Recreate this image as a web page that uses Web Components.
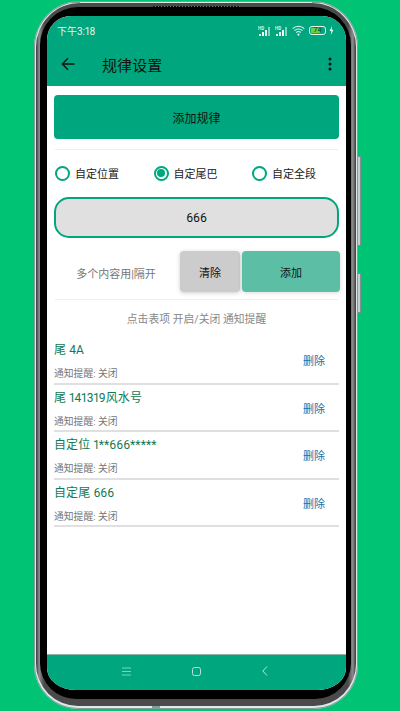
<!DOCTYPE html>
<html lang="zh">
<head>
<meta charset="utf-8">
<title>规律设置</title>
<style>
  html, body { margin: 0; height: 711px; overflow: hidden; }
  body {
    background: #00c373;
    font-family: Roboto, "Noto Sans CJK SC", sans-serif;
    font-variant-numeric: proportional-nums;
    display: flex;
    justify-content: flex-start;
    padding: 1px 0 0 34px;
    box-sizing: border-box;
  }
</style>
</head>
<body>
<x-phone>
  <x-status-bar></x-status-bar>
  <x-app-bar title="规律设置"></x-app-bar>
  <x-rule-page>
    <x-rule-row title="尾 4A"></x-rule-row>
    <x-rule-row title="尾 141319风水号"></x-rule-row>
    <x-rule-row title="自定位 1**666*****"></x-rule-row>
    <x-rule-row title="自定尾 666"></x-rule-row>
  </x-rule-page>
  <x-nav-bar></x-nav-bar>
</x-phone>

<script>
class XPhone extends HTMLElement {
  constructor() {
    super();
    this.attachShadow({ mode: "open" });
    this.shadowRoot.innerHTML = `
    <style>
      :host { display: block; position: relative; width: 324px; height: 708px; }
      .rim {
        width: 100%; height: 100%; box-sizing: border-box;
        padding: 2px 2px 3px;
        border-radius: 46px 46px 44px 44px;
        background: #dfe9ea;
        box-shadow: inset 0 0 0 1px #7f9c9e;
      }
      .metal {
        height: 100%; box-sizing: border-box;
        padding: 4px 5px 7px 4px;
        border-radius: 44px 44px 42px 42px;
        background: linear-gradient(90deg, #3a3a3a, #8c8c8c 1%, #4a4a4a 2.500%, #4a4a4a 97.500%, #8c8c8c 99%, #3a3a3a);
      }
      .bezel {
        height: 100%; box-sizing: border-box;
        padding: 9px 5px 9px 7px;
        border-radius: 38px 38px 36px 36px;
        background: #000;
      }
      .screen {
        height: 100%;
        border-radius: 24px 24px 28px 28px / 24px 24px 22px 22px;
        overflow: hidden;
        background: #fff;
        display: flex;
        flex-direction: column;
      }
      .key {
        position: absolute; right: -3px; width: 3px;
        background: #c4ced0; border: 1px solid #7d9094; border-left: 0;
        box-sizing: border-box; border-radius: 0 1px 1px 0;
      }
      .k1 { top: 155px; height: 90px; }
      .k2 { top: 272px; height: 40px; }
      .speaker {
        position: absolute; top: 5px; left: 119px; width: 87px; height: 1px;
        background: repeating-linear-gradient(90deg, #111 0 2px, #777 2px 3px);
      }
      .tab { position: absolute; background: #7f9c9e; }
      .t1 { top: 0; left: 38px; width: 8px; height: 2px; }
      .t2 { top: 0; left: 278px; width: 8px; height: 2px; }
      .t3 { bottom: 0; left: 118px; width: 8px; height: 3px; }
    </style>
    <div class="rim"><div class="metal"><div class="bezel">
      <div class="screen"><slot></slot></div>
    </div></div></div>
    <i class="speaker"></i>
    <i class="tab t1"></i><i class="tab t2"></i><i class="tab t3"></i>
    <i class="key k1"></i><i class="key k2"></i>`;
  }
}

class XStatusBar extends HTMLElement {
  constructor() {
    super();
    this.attachShadow({ mode: "open" });
    const signal = `
      <svg width="14" height="12" viewBox="0 0 14 12">
        <text x="0" y="4.500" font-size="4.500" font-weight="700" fill="#dff5ec" font-family="Roboto">HD</text>
        <g fill="#e6f7f0"><rect x="1" y="9" width="2" height="2"/><rect x="4" y="7" width="2" height="4"/><rect x="7" y="5" width="2" height="6"/></g>
        <rect x="10" y="2" width="2" height="9" fill="#7fd2bb"/>
      </svg>`;
    this.shadowRoot.innerHTML = `
    <style>
      :host { display: flex; align-items: center; justify-content: space-between; height: 28px; padding: 1px 12px 0 10px; box-sizing: border-box; background: #00a67d; color: #e6f7f0; font-size: 10px; flex: none; }
      .icons { display: flex; align-items: center; gap: 3px; }
      .batt { width: 15px; height: 7px; border: 1px solid #e6f7f0; border-radius: 3px; position: relative; margin-left: 1px; }
      .batt i { position: absolute; left: 1px; top: 1px; bottom: 1px; width: 9px; background: #6bd13f; border-radius: 1px; }
      .batt b { position: relative; display: block; text-align: center; font: 700 7px/7px Roboto, sans-serif; color: #0b6b45; }
    </style>
    <span>下午3:18</span>
    <span class="icons">
      ${signal}${signal}
      <svg width="13" height="11" viewBox="0 0 13 11" fill="none" stroke="#e6f7f0" stroke-width="1.100">
        <path d="M.7 3.600a8.200 8.200 0 0 1 11.600 0M2.500 5.600a5.700 5.700 0 0 1 8 0M4.300 7.500a3.200 3.200 0 0 1 4.400 0"/><circle cx="6.500" cy="9.600" r=".6" fill="#e6f7f0"/>
      </svg>
      <span class="batt"><i></i><b>74</b></span>
      <svg width="5" height="9" viewBox="0 0 5 9"><path d="M3 0 .5 5H2.300L1.800 9 4.500 3.800H2.700Z" fill="#e6f7f0"/></svg>
    </span>`;
  }
}

class XAppBar extends HTMLElement {
  constructor() {
    super();
    this.attachShadow({ mode: "open" });
    this.shadowRoot.innerHTML = `
    <style>
      :host { display: flex; align-items: center; height: 42px; background: #00a67d; flex: none; color: #111; padding-bottom: 2px; box-sizing: border-box; }
      .back { margin-left: 14px; display: block; }
      .title { font-size: 15px; margin-left: 27px; flex: 1; letter-spacing: .1px; }
      .more { margin-right: 14px; display: block; }
    </style>
    <svg class="back" width="14" height="14" viewBox="0 0 14 14" fill="none" stroke="#111" stroke-width="1.400">
      <path d="M13.500 7H1.500M7 1.300 1.300 7 7 12.700"/>
    </svg>
    <span class="title">${this.getAttribute("title")}</span>
    <svg class="more" width="4" height="14" viewBox="0 0 4 14" fill="#111">
      <circle cx="2" cy="2" r="1.500"/><circle cx="2" cy="7" r="1.500"/><circle cx="2" cy="12" r="1.500"/>
    </svg>`;
  }
}

class XRadio extends HTMLElement {
  constructor() {
    super();
    this.attachShadow({ mode: "open" });
    this.shadowRoot.innerHTML = `
    <style>
      :host { display: flex; align-items: center; gap: 5px; font-size: 11px; color: #222; }
      .dot { width: 15px; height: 15px; box-sizing: border-box; border: 2px solid #00a67d; border-radius: 50%; display: grid; place-items: center; }
      :host([checked]) .dot::after { content: ""; width: 8px; height: 8px; border-radius: 50%; background: #00a67d; }
    </style>
    <span class="dot"></span><slot></slot>`;
  }
}

class XRuleRow extends HTMLElement {
  constructor() {
    super();
    this.attachShadow({ mode: "open" });
    this.shadowRoot.innerHTML = `
    <style>
      :host { display: flex; height: 47.500px; box-sizing: border-box; border-bottom: 2px solid #e0e0e0; }
      .text { flex: 1; }
      .title { color: #0f7a55; font-size: 12px; line-height: 16px; padding-top: 5px; letter-spacing: .1px; white-space: nowrap; }
      .sub { color: #777; font-size: 9.800px; line-height: 12px; margin-top: 10px; }
      .del { color: #1a73a8; font-size: 11px; width: 36px; text-align: left; align-self: center; flex: none; padding-top: 1px; }
    </style>
    <div class="text">
      <div class="title">${this.getAttribute("title")}</div>
      <div class="sub">通知提醒: 关闭</div>
    </div>
    <span class="del">删除</span>`;
  }
}

class XRulePage extends HTMLElement {
  constructor() {
    super();
    this.attachShadow({ mode: "open" });
    this.shadowRoot.innerHTML = `
    <style>
      :host { display: block; flex: 1; min-height: 0; padding: 9px 7px 0; color: #111; font-size: 11px; }
      .btn { display: grid; place-items: center; border-radius: 4px; }
      .add-rule { height: 44px; background: #00a67d; font-size: 12px; }
      hr { border: 0; height: 1px; background: #eee; margin: 0 1px; }
      .top-line { margin-top: 10px; }
      .radios { display: grid; grid-template-columns: 98.500px 98.500px 1fr; padding: 15px 1px 0; height: 15px; margin-bottom: 17px; }
      .input { height: 41px; box-sizing: border-box; border: 2px solid #00a67d; border-radius: 15px; background: #e0e0e0; display: grid; place-items: center; font-size: 12px; }
      .actions { display: flex; align-items: stretch; height: 41px; margin-top: 13px; }
      .tip { width: 126px; display: grid; place-items: center; color: #777; font-size: 11px; box-sizing: border-box; padding: 2px 2px 0 0; }
      .clear { width: 60px; background: #cccccc; box-shadow: 0 1px 4px rgba(0,0,0,.2); }
      .add { flex: 1; margin-left: 2px; background: #5cbfa5; box-shadow: 0 1px 4px rgba(0,0,0,.15); margin-right: -1px; }
      .bottom-line { margin-top: 7px; }
      .hint { text-align: center; color: #888; font-size: 10.800px; line-height: 14px; margin: 13px 0 10px; }
      .rows { display: block; }
    </style>
    <div class="btn add-rule">添加规律</div>
    <hr class="top-line">
    <div class="radios">
      <x-radio>自定位置</x-radio>
      <x-radio checked>自定尾巴</x-radio>
      <x-radio>自定全段</x-radio>
    </div>
    <div class="input">666</div>
    <div class="actions">
      <div class="tip">多个内容用|隔开</div>
      <div class="btn clear">清除</div>
      <div class="btn add">添加</div>
    </div>
    <hr class="bottom-line">
    <div class="hint">点击表项 开启/关闭 通知提醒</div>
    <div class="rows"><slot></slot></div>`;
  }
}

class XNavBar extends HTMLElement {
  constructor() {
    super();
    this.attachShadow({ mode: "open" });
    this.shadowRoot.innerHTML = `
    <style>
      :host { display: block; height: 36px; flex: none; background: #00a67d; border-top: 1px solid #8fb5ab; box-sizing: border-box; }
      .icons { display: grid; grid-template-columns: 8px 8px 6px; justify-content: start; align-items: center; column-gap: 62px; height: 100%; padding-left: 75px; padding-bottom: 3px; box-sizing: border-box; }
      svg { display: block; }
    </style>
    <div class="icons">
      <svg width="9" height="9" viewBox="0 0 9 9" stroke="#7fd2bb" stroke-width="1"><path d="M0 1h9M0 4.500h9M0 8h9"/></svg>
      <svg width="9" height="9" viewBox="0 0 9 9" fill="none" stroke="#b5e6d8" stroke-width="1"><rect x=".5" y=".5" width="8" height="8" rx="2"/></svg>
      <svg width="6" height="10" viewBox="0 0 6 10" fill="none" stroke="#b5e6d8" stroke-width="1"><path d="M5 .5.800 5 5 9.500"/></svg>
    </div>`;
  }
}

customElements.define("x-phone", XPhone);
customElements.define("x-status-bar", XStatusBar);
customElements.define("x-app-bar", XAppBar);
customElements.define("x-radio", XRadio);
customElements.define("x-rule-row", XRuleRow);
customElements.define("x-rule-page", XRulePage);
customElements.define("x-nav-bar", XNavBar);
</script>
</body>
</html>
